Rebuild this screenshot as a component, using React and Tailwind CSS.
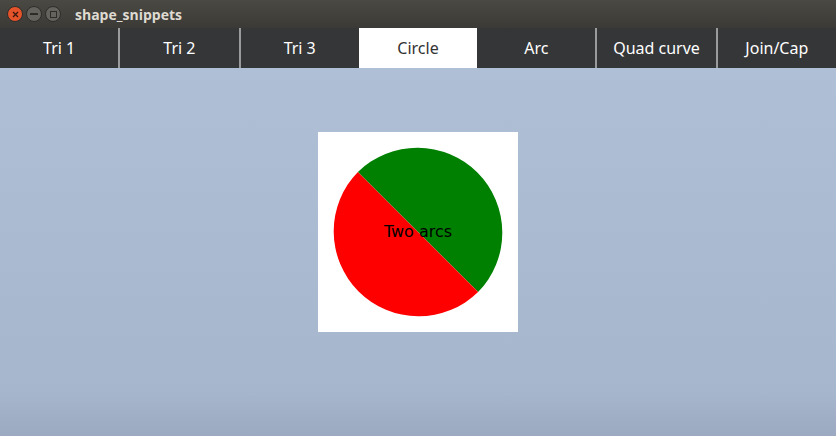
import { useState } from "react";

const tabs = ["Tri 1", "Tri 2", "Tri 3", "Circle", "Arc", "Quad curve", "Join/Cap"];
// tabs that carry a divider on their right edge
const divided = [0, 1, 4, 5];

function WinButton({ color, children }) {
  return (
    <div
      className={`w-[16px] h-[16px] rounded-full flex items-center justify-center border border-[#2e2d2a] ${color}`}
    >
      {children}
    </div>
  );
}

export default function App() {
  const [active, setActive] = useState(3);

  return (
    <div className="w-[836px] h-[436px] flex flex-col overflow-hidden font-['Noto_Sans',sans-serif]">
      {/* title bar */}
      <div className="h-[28px] flex items-center bg-gradient-to-b from-[#4a4944] to-[#3b3a36] pl-[7px] gap-[3px]">
        <WinButton color="bg-[#e5532a]">
          <svg width="7" height="7" viewBox="0 0 7 7">
            <path d="M1 1L6 6M6 1L1 6" stroke="#3a1a0e" strokeWidth="1.4" />
          </svg>
        </WinButton>
        <WinButton color="bg-[#64635e]">
          <div className="w-[8px] h-[2px] bg-[#2d2c29]" />
        </WinButton>
        <WinButton color="bg-[#64635e]">
          <div className="w-[7px] h-[7px] border-[1.5px] border-[#2d2c29]" />
        </WinButton>
        <span className="ml-[11px] text-[14px] font-bold text-[#dfdbd2] font-['Open_Sans',sans-serif]">
          shape_snippets
        </span>
      </div>

      {/* tab strip */}
      <div className="h-[40px] flex bg-[#353638]">
        {tabs.map((t, i) => (
          <button
            key={t}
            onClick={() => setActive(i)}
            className={`flex-1 flex items-center justify-center text-[16px] ${
              divided.includes(i) ? "border-r-2 border-[#9a9b9c]" : ""
            } ${i === active ? "bg-white text-[#333]" : "text-white"}`}
          >
            {t}
          </button>
        ))}
      </div>

      {/* content */}
      <div className="flex-1 bg-[linear-gradient(to_bottom,#afc0d6_0%,#a6b6cd_88%,#9ba9c1_100%)] flex justify-center pt-[64px]">
        <div className="w-[200px] h-[200px] bg-white relative">
          <svg width="200" height="200" viewBox="0 0 200 200">
            <path d="M39.9 39.9 A85 85 0 0 1 160.1 160.1 Z" fill="#008000" />
            <path d="M160.1 160.1 A85 85 0 0 1 39.9 39.9 Z" fill="#ff0000" />
          </svg>
          <span className="absolute inset-0 flex items-center justify-center text-[16px] text-black font-['DejaVu_Sans',sans-serif] leading-none">
            Two arcs
          </span>
        </div>
      </div>
    </div>
  );
}
